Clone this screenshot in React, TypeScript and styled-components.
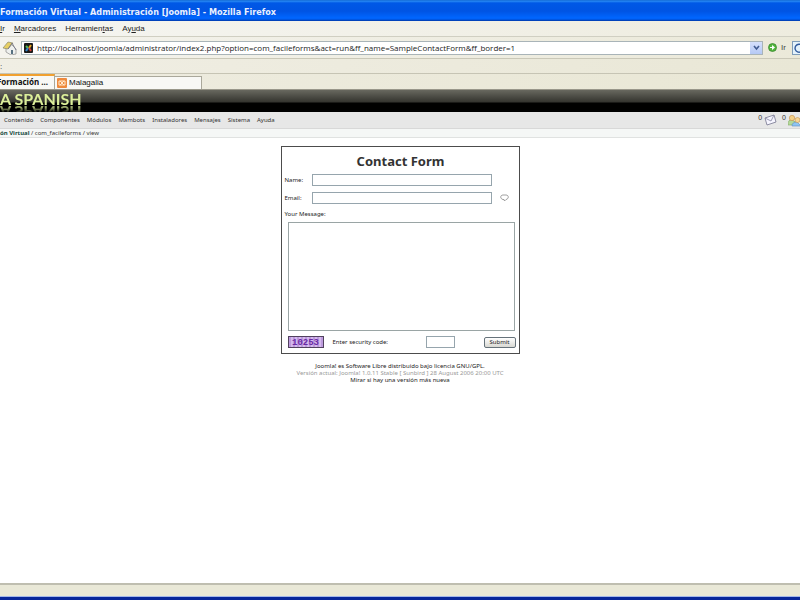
import React from "react";
import styled, { createGlobalStyle } from "styled-components";

const GlobalStyle = createGlobalStyle`
  * { box-sizing: border-box; }
  body { margin: 0; background: #fff; color: #333; font: 8px/10px "Liberation Sans", Arial, sans-serif; }
  button, input, textarea { font: inherit; color: inherit; border-radius: 0; outline: none; }
  a { color: inherit; text-decoration: none; }
`;

const Window = styled.div`
  min-height: 100vh;
  display: flex;
  flex-direction: column;
  overflow: hidden;
`;

const TitleBar = styled.header`
  height: 21px;
  display: flex;
  align-items: center;
  padding-top: 3px;
  background: linear-gradient(#0a5cc8 0, #2a8cf5 1px, #0058e6 3px, #0054e3 11px, #0066ff 18px, #0060f5 19px, #0038a8 21px);
`;

const WindowTitle = styled.h1`
  margin: 0;
  color: #e8f0ff;
  font: bold 9px/12px "DejaVu Sans Condensed", "DejaVu Sans", sans-serif;
  white-space: nowrap;
`;

const AppMenu = styled.nav`
  height: 16px;
  display: flex;
  align-items: center;
  gap: 9px;
  background: linear-gradient(90deg, #f5f5f1, #eeecdf);
  border-bottom: 1px solid #d0cfc2;
`;

const AppMenuItem = styled.button`
  border: 0;
  padding: 0;
  background: none;
  color: #222;
  font-size: 8px;
  line-height: 12px;
  white-space: nowrap;
`;

const NavBar = styled.div`
  height: 22px;
  display: flex;
  align-items: center;
  padding-left: 2px;
  background: linear-gradient(90deg, #f4f3ed, #ebe9d9);
  border-bottom: 1px solid #cac8b8;
`;

const IconButton = styled.button`
  border: 0;
  padding: 0;
  background: none;
  display: flex;
  align-items: center;
  gap: 4px;
  color: #444;
`;

const Address = styled.div`
  flex: 1;
  min-width: 0;
  height: 14px;
  margin: 0 5px 0 4px;
  display: flex;
  align-items: center;
  gap: 4px;
  padding-left: 2px;
  background: #fff;
  border: 1px solid #a9b4b8;
`;

const AddressInput = styled.input`
  flex: 1;
  min-width: 0;
  height: 12px;
  padding: 0;
  border: 0;
  background: none;
  color: #222;
  font: 8px/12px "Open Sans", sans-serif;
`;

const DropButton = styled.button`
  width: 12px;
  height: 12px;
  border: 0;
  padding: 0;
  display: flex;
  align-items: center;
  justify-content: center;
  background: linear-gradient(#d5e0fc, #b5c9f5);
`;

const SearchEdge = styled.button`
  width: 8px;
  height: 14px;
  margin-left: 6px;
  padding: 1px 0 0 1px;
  overflow: hidden;
  border: 1px solid #7f9db9;
  border-right: 0;
  background: #e4f2fb;
`;

const BookmarkBar = styled.div`
  height: 15px;
  padding-top: 3px;
  background: linear-gradient(90deg, #f0eee4, #e9e7d6);
  border-bottom: 1px solid #c6c4b4;
`;

const TabStrip = styled.nav`
  height: 16px;
  display: flex;
  align-items: flex-end;
  background: linear-gradient(90deg, #eeece0, #e9e7d5);
  border-bottom: 1px solid #99978a;
`;

const Tab = styled.button<{ $active?: boolean }>`
  width: ${(p) => (p.$active ? 55 : 147)}px;
  height: ${(p) => (p.$active ? 15 : 13)}px;
  display: flex;
  align-items: center;
  justify-content: ${(p) => (p.$active ? "flex-end" : "flex-start")};
  gap: 2px;
  padding: ${(p) => (p.$active ? "0 6px 2px 0" : "0 0 0 2px")};
  border: 0 solid #aaa89b;
  border-width: ${(p) => (p.$active ? "2px 1px 0 0" : "1px 1px 0 0")};
  border-top-color: ${(p) => (p.$active ? "#f0a030" : "#aaa89b")};
  background: #f8f8f5;
  color: #111;
  font-family: ${(p) => (p.$active ? '"Noto Sans"' : '"Liberation Sans"')}, sans-serif;
  font-size: 8px;
  font-weight: ${(p) => (p.$active ? "bold" : "normal")};
  white-space: nowrap;
`;

const Banner = styled.header`
  height: 22px;
  display: flex;
  align-items: flex-start;
  background: linear-gradient(#68685f 0, #34342f 12px, #000 13px);
`;

const BannerTitle = styled.div`
  color: #dcef9a;
  font: bold 16px/18px Lato, sans-serif;
  white-space: nowrap;
  -webkit-box-reflect: below -5px linear-gradient(transparent 45%, rgba(0, 0, 0, 0.7) 75%);
`;

const AdminMenu = styled.nav`
  height: 17px;
  display: flex;
  align-items: center;
  gap: 7px;
  padding-left: 4px;
  background: #e7e7e7;
  border-bottom: 1px solid #d8d8d8;
`;

const AdminItem = styled.button`
  border: 0;
  padding: 0;
  background: none;
  color: #333;
  font: 6px/10px "Noto Sans", sans-serif;
  white-space: nowrap;
`;

const AdminStatus = styled.div`
  margin-left: auto;
  display: flex;
  align-items: center;
  gap: 2px;
  font-size: 7px;
  line-height: 10px;
`;

const Count = styled.span`
  padding: 0 0 4px 3px;
`;

const Breadcrumb = styled.nav`
  height: 9px;
  display: flex;
  align-items: center;
  background: #f5f7f6;
  border-bottom: 1px solid #e0e2e1;
  font: 6px/8px "Noto Sans", sans-serif;
  white-space: pre;
  b { color: #164a40; }
`;

const Content = styled.main`
  flex: 1;
  display: flex;
  flex-direction: column;
  align-items: center;
  padding-top: 8px;
`;

const FormBox = styled.form`
  width: 239px;
  padding: 5px 2px 3px 3px;
  border: 1px solid #4c4c4c;
  color: #222;
  font: 6px/10px "Noto Sans", sans-serif;
`;

const FormTitle = styled.h2`
  margin: 0 0 1px;
  text-align: center;
  color: #333;
  font-size: 13px;
  line-height: 18px;
`;

const FieldRow = styled.div`
  display: grid;
  grid-template-columns: 27px 180px 1fr;
  align-items: center;
  height: 18px;
`;

const TextInput = styled.input`
  width: 100%;
  height: 12px;
  padding: 0 1px;
  border: 1px solid #96a5ad;
  background: #fff;
`;

const Hint = styled.button`
  justify-self: center;
  padding: 0;
  border: 0;
  background: none;
  display: flex;
`;

const MessageLabel = styled.label`
  display: block;
  line-height: 14px;
`;

const Message = styled.textarea`
  display: block;
  width: 227px;
  height: 109px;
  margin: 1px 0 3px 3px;
  padding: 2px;
  resize: none;
  border: 1px solid #9aa5a5;
`;

const SubmitRow = styled.div`
  display: flex;
  align-items: center;
  height: 16px;
  padding: 0 1px 0 3px;
`;

const CodeLabel = styled.label`
  flex: 1;
  margin-left: 9px;
`;

const CodeInput = styled(TextInput)`
  width: 29px;
  margin-right: 29px;
`;

const Submit = styled.button`
  width: 32px;
  height: 11px;
  padding: 0;
  border: 1px solid #66727a;
  border-radius: 2px;
  background: linear-gradient(#fff, #d8d8d2);
  line-height: 8px;
`;

const Captcha = styled.div`
  width: 36px;
  height: 12px;
  border: 1px solid #51425e;
  background: repeating-linear-gradient(90deg, #bd9bdd 0, #bd9bdd 2px, #d5b9ed 2px, #d5b9ed 4px);
  color: #6a2aa5;
  text-align: center;
  font: bold 9px/12px "Liberation Mono", monospace;
`;

const Footer = styled.footer`
  padding-top: 9px;
  text-align: center;
  color: #222;
  font: 6px/7px "Noto Sans", sans-serif;
  p { margin: 0; }
`;

const Muted = styled.p`
  color: #999;
`;

const StatusBar = styled.footer`
  height: 17px;
  background: #e9e8d7;
  border-top: 2px solid #bfbeb0;
  border-bottom: 3px solid #08279b;
  box-shadow: inset 0 -1px #a4b8ea;
`;

const adminItems = ["Contenido", "Componentes", "Módulos", "Mambots", "Instaladores", "Mensajes", "Sistema", "Ayuda"];

function HomeIcon() {
  return (
    <svg width="15" height="14" viewBox="0 0 15 14" aria-hidden="true">
      <path d="M4 7 9 3l5 5v5l-5 1-5-3z" fill="#eef0ee" stroke="#888" strokeWidth=".7" />
      <path d="M1 7 6 1l5 1-5 6z" fill="#e7cf63" stroke="#8b8a70" strokeWidth=".7" />
      <path d="M10 2 6 8M10 2l4 7" fill="none" stroke="#778" strokeWidth=".9" />
      <path d="M9 9h2v4H9z" fill="#577080" />
    </svg>
  );
}

function JoomlaIcon() {
  return (
    <svg width="9" height="10" viewBox="0 0 9 10" aria-hidden="true">
      <rect width="9" height="10" rx="1" fill="#191919" />
      <path d="M2 3 4 5" stroke="#5b5" strokeWidth="2" />
      <path d="m7 2-2 3" stroke="#e7a721" strokeWidth="2" />
      <path d="m5 5 2 3" stroke="#d54235" strokeWidth="2" />
      <path d="m4 5-2 3" stroke="#3585c9" strokeWidth="2" />
    </svg>
  );
}

function PeopleIcon() {
  return (
    <svg width="12" height="13" viewBox="0 0 12 13" aria-hidden="true">
      <path d="M0 11Q0 5 4 6t4 5z" fill="#b5d99a" stroke="#7fa863" strokeWidth=".6" />
      <circle cx="4" cy="4" r="2.7" fill="#f3cf86" stroke="#c38e4c" strokeWidth=".6" />
      <path d="M4 12q0-4 5-4l4 4z" fill="#8fc4f2" stroke="#5a8fc4" strokeWidth=".6" />
      <circle cx="9.500" cy="6" r="2.500" fill="#f8d795" stroke="#c38e4c" strokeWidth=".6" />
    </svg>
  );
}

export default function App() {
  return (
    <>
      <GlobalStyle />
      <Window>
        <TitleBar>
          <WindowTitle>Formación Virtual - Administración [Joomla] - Mozilla Firefox</WindowTitle>
        </TitleBar>
        <AppMenu>
          <AppMenuItem><u>I</u>r</AppMenuItem>
          <AppMenuItem><u>M</u>arcadores</AppMenuItem>
          <AppMenuItem>Herramien<u>t</u>as</AppMenuItem>
          <AppMenuItem>Ay<u>u</u>da</AppMenuItem>
        </AppMenu>
        <NavBar>
          <IconButton aria-label="Inicio"><HomeIcon /></IconButton>
          <Address>
            <JoomlaIcon />
            <AddressInput
              aria-label="Dirección"
              defaultValue="http://localhost/joomla/administrator/index2.php?option=com_facileforms&act=run&ff_name=SampleContactForm&ff_border=1"
            />
            <DropButton aria-label="Historial">
              <svg width="7" height="6" viewBox="0 0 7 6"><path d="m1 1 2.500 3L6 1" fill="none" stroke="#405b91" strokeWidth="1.6" /></svg>
            </DropButton>
          </Address>
          <IconButton>
            <svg width="9" height="9" viewBox="0 0 9 9" aria-hidden="true">
              <circle cx="4.500" cy="4.500" r="4" fill="#54b53e" stroke="#328229" strokeWidth=".7" />
              <path d="M2 4h2V2l3 2.500L4 7V5H2z" fill="#fff" />
            </svg>
            Ir
          </IconButton>
          <SearchEdge aria-label="Buscar">
            <svg width="10" height="10" viewBox="0 0 10 10">
              <path d="M8 2.500A4 4 0 1 0 9 6H6" fill="none" stroke="#315b9d" strokeWidth="1.4" />
            </svg>
          </SearchEdge>
        </NavBar>
        <BookmarkBar>:</BookmarkBar>
        <TabStrip>
          <Tab $active>Formación ...</Tab>
          <Tab>
            <svg width="10" height="10" viewBox="0 0 10 10" aria-hidden="true">
              <rect width="10" height="10" rx="1" fill="#ee8a3d" />
              <path d="M2 3h6v4H2zM3 3l2 2 2-2M3 7l2-2 2 2" fill="none" stroke="#ffe9cc" />
            </svg>
            Malagalia
          </Tab>
        </TabStrip>
        <Banner>
          <BannerTitle>A SPANISH</BannerTitle>
        </Banner>
        <AdminMenu>
          {adminItems.map((item) => <AdminItem key={item}>{item}</AdminItem>)}
          <AdminStatus>
            <Count>0</Count>
            <svg width="13" height="12" viewBox="0 0 13 12" aria-label="Mensajes">
              <path d="m1 4 9-3 2 7-9 3z" fill="#f6f5ff" stroke="#75758e" strokeWidth=".8" />
              <path d="m1 4 6 3 3-6" fill="none" stroke="#8585a0" strokeWidth=".8" />
            </svg>
            <Count>0</Count>
            <PeopleIcon />
          </AdminStatus>
        </AdminMenu>
        <Breadcrumb><b>ón Virtual</b> / com_facileforms / view</Breadcrumb>
        <Content>
          <FormBox onSubmit={(e: React.FormEvent) => e.preventDefault()}>
            <FormTitle>Contact Form</FormTitle>
            <FieldRow>
              <label htmlFor="name">Name:</label>
              <TextInput id="name" autoFocus />
            </FieldRow>
            <FieldRow>
              <label htmlFor="email">Email:</label>
              <TextInput id="email" type="email" />
              <Hint type="button" aria-label="Ayuda">
                <svg width="9" height="8" viewBox="0 0 9 8"><path d="M3 5.500C0 5 0 1 3 1h3c3 0 3 4 0 4.500L4.500 7 4 5.500z" fill="#fff" stroke="#888" strokeWidth=".8" /></svg>
              </Hint>
            </FieldRow>
            <MessageLabel htmlFor="message">Your Message:</MessageLabel>
            <Message id="message" />
            <SubmitRow>
              <Captcha>10253</Captcha>
              <CodeLabel htmlFor="code">Enter security code:</CodeLabel>
              <CodeInput id="code" />
              <Submit type="submit">Submit</Submit>
            </SubmitRow>
          </FormBox>
          <Footer>
            <p><a href="#joomla">Joomla!</a> es Software Libre distribuido bajo licencia GNU/GPL.</p>
            <Muted>Versión actual: Joomla! 1.0.11 Stable [ Sunbird ] 28 August 2006 20:00 UTC</Muted>
            <p><a href="#version">Mirar si hay una versión más nueva</a></p>
          </Footer>
        </Content>
        <StatusBar />
      </Window>
    </>
  );
}
